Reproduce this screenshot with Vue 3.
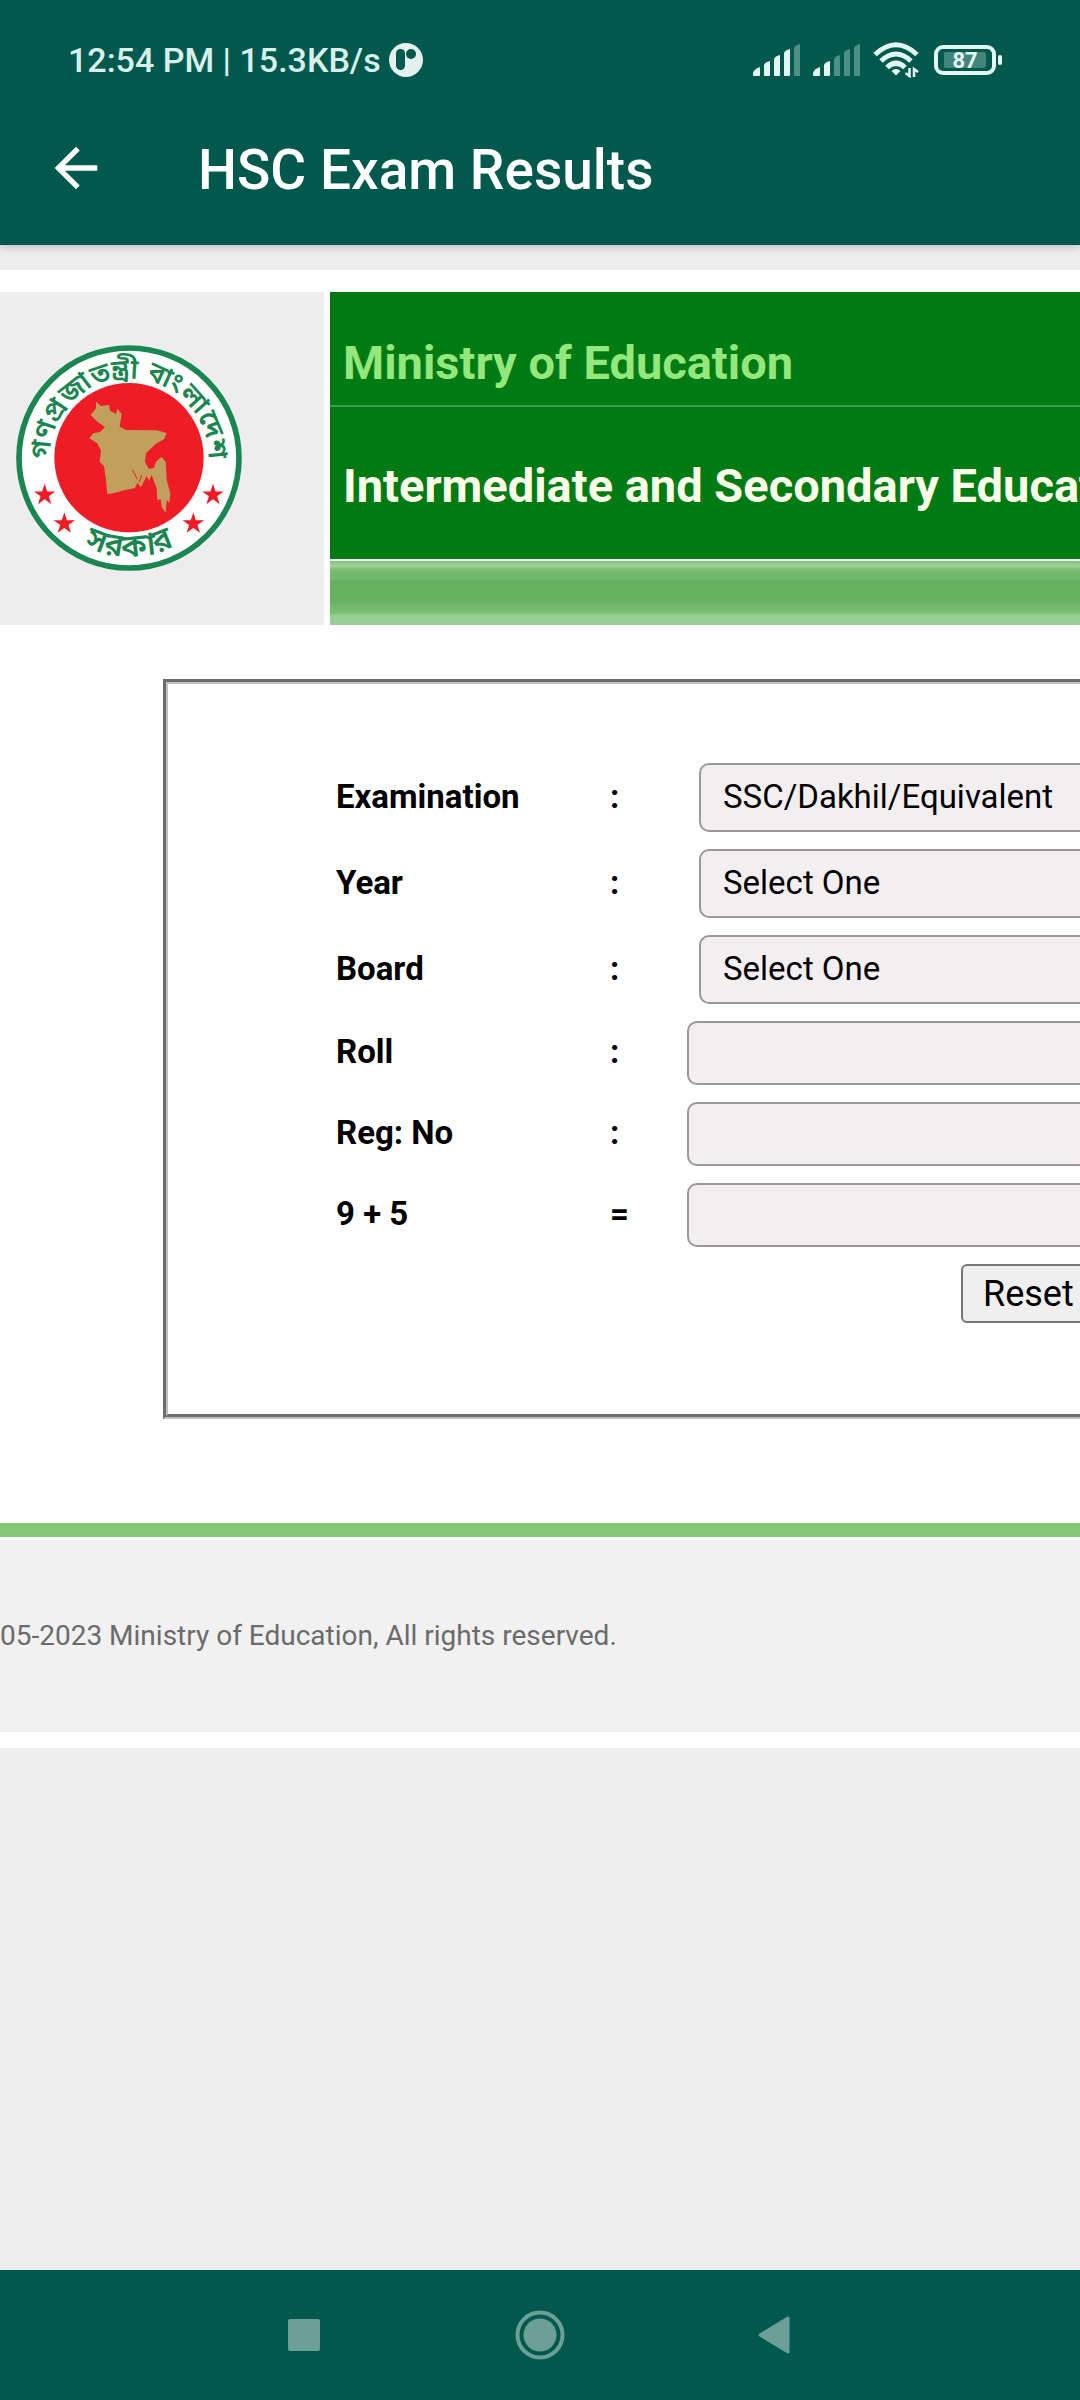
<template>
  <div class="screen">
    <header class="top">
      <div class="status-bar">
        <div class="status-left">
          <span>12:54 PM | 15.3KB/s</span>
          <svg class="app-badge" viewBox="0 0 34 34" aria-hidden="true">
            <circle cx="17" cy="17" r="17" fill="#e3f0ee" />
            <rect x="7" y="6" width="9" height="21" rx="4.500" fill="#00594c" />
            <circle cx="22" cy="11" r="5" fill="#00594c" />
          </svg>
        </div>
        <div class="status-right">
          <svg v-for="(level, i) in signals" :key="i" class="signal" viewBox="0 0 48 32" aria-hidden="true">
            <path
              v-for="(bar, n) in bars"
              :key="n"
              :d="bar"
              fill="#e3f6f3"
              :fill-opacity="n < level ? 1 : 0.35"
            />
          </svg>
          <svg class="wifi" viewBox="0 0 46 36" aria-hidden="true">
            <g fill="none" stroke="#e3f6f3" stroke-width="5">
              <path d="M2 12.500Q23-7 44 12.500" />
              <path d="M8 19Q23 5 38 19" />
              <path d="M14 25.500Q23 17 32 25.500" />
            </g>
            <path d="M18.500 29Q23 25 27.500 29L23 33.500z" fill="#e3f6f3" />
            <path d="M36.500 26v8l-4-3M41 35v-8l4 3" fill="none" stroke="#e3f6f3" stroke-width="2.500" />
          </svg>
          <div class="battery">
            <span>87</span>
          </div>
        </div>
      </div>
      <div class="app-bar">
        <button class="back-btn" type="button" aria-label="Back">
          <svg viewBox="0 0 24 24">
            <path d="M20 11H7.830l5.590-5.590L12 4l-8 8 8 8 1.410-1.410L7.830 13H20z" fill="#fff" />
          </svg>
        </button>
        <h1>HSC Exam Results</h1>
      </div>
    </header>

    <main class="webview">
      <div class="page">
        <div class="banner">
          <div class="banner-logo">
            <svg class="emblem" viewBox="48 195 678 678" role="img" aria-label="Government emblem">
              <defs>
                <path id="arc-top" d="M152.600 575A238 238 0 1 1 621.400 575" />
                <path id="arc-bottom" d="M91 534A296 296 0 0 0 683 534" />
              </defs>
              <circle cx="387" cy="534" r="330" fill="#fff" stroke="#1b8652" stroke-width="17" />
              <circle cx="387" cy="533" r="224" fill="#ee1d25" />
              <path
                d="M288 365L303 378L327 375L330 392L348 402L352 387L365 402L359 440L378 450L470 451L500 459L492 478L470 490L450 508L438 520L435 545L446 566L462 564L468 545L485 530L497 546L500 600L511 640L508 668L500 660L497 698L485 682L482 658L472 660L470 625L455 585L447 602L440 588L423 622L412 608L405 624L375 630L340 640L322 642L318 600L312 558L299 545L303 512L292 490L268 475L280 460L300 456L315 441L292 425L272 405L288 385z"
                fill="#c1a05d"
              />
              <path d="M398 570L412 598M425 585L418 606" stroke="#ee1d25" stroke-width="3" />
              <path v-for="(s, i) in stars" :key="i" :d="starPath(s[0], s[1])" fill="#ee1d25" />
              <text class="ring-text">
                <textPath href="#arc-top" startOffset="50%" text-anchor="middle">গণপ্রজাতন্ত্রী বাংলাদেশ</textPath>
              </text>
              <text class="ring-text ring-text-bottom">
                <textPath href="#arc-bottom" startOffset="50%" text-anchor="middle">সরকার</textPath>
              </text>
            </svg>
          </div>
          <div class="banner-text">
            <p class="ministry">Ministry of Education</p>
            <p class="boards">Intermediate and Secondary Education</p>
            <div class="banner-strip"></div>
          </div>
        </div>

        <form class="result-form" @submit.prevent @reset.prevent="reset">
          <template v-for="field in fields" :key="field.id">
            <label :for="field.id">{{ field.label }}</label>
            <span class="mark">{{ field.mark || ':' }}</span>
            <select v-if="field.options" :id="field.id" v-model="form[field.id]">
              <option v-for="option in field.options" :key="option">{{ option }}</option>
            </select>
            <input v-else :id="field.id" v-model="form[field.id]" type="text" />
          </template>
          <div class="form-actions">
            <button type="reset">Reset</button>
          </div>
        </form>

        <footer class="page-footer">05-2023 Ministry of Education, All rights reserved.</footer>
      </div>
    </main>

    <nav class="nav-bar">
      <button type="button" aria-label="Recent apps">
        <svg viewBox="0 0 50 50"><rect x="9" y="9" width="32" height="32" rx="2" fill="#6b9f97" /></svg>
      </button>
      <button type="button" aria-label="Home">
        <svg viewBox="0 0 50 50">
          <circle cx="25" cy="25" r="22.500" fill="none" stroke="#6b9f97" stroke-width="4" />
          <circle cx="25" cy="25" r="16.500" fill="#6b9f97" />
        </svg>
      </button>
      <button type="button" aria-label="Back">
        <svg viewBox="0 0 50 50">
          <path d="M9 25L37 8V42z" fill="#6b9f97" stroke="#6b9f97" stroke-width="3" stroke-linejoin="round" />
        </svg>
      </button>
    </nav>
  </div>
</template>

<script setup>
import { reactive } from 'vue'

const signals = [4, 2]

const bars = [
  'M0 31v-2q1-4 7-6v8q0 1-1 1h-5q-1 0-1-1z',
  'M11 31V21q1-3 6-4v14q0 1-1 1h-4q-1 0-1-1z',
  'M21 31V15q1-3 6-4v20q0 1-1 1h-4q-1 0-1-1z',
  'M31 31V9q1-3 6-4v26q0 1-1 1h-4q-1 0-1-1z',
  'M41 31V4q1-3 6-4v31q0 1-1 1h-4q-1 0-1-1z'
]

const fields = [
  { id: 'exam', label: 'Examination', options: ['SSC/Dakhil/Equivalent'] },
  { id: 'year', label: 'Year', options: ['Select One'] },
  { id: 'board', label: 'Board', options: ['Select One'] },
  { id: 'roll', label: 'Roll' },
  { id: 'reg', label: 'Reg: No' },
  { id: 'captcha', label: '9 + 5', mark: '=' }
]

const defaults = {
  exam: 'SSC/Dakhil/Equivalent',
  year: 'Select One',
  board: 'Select One',
  roll: '',
  reg: '',
  captcha: ''
}

const form = reactive({ ...defaults })

const reset = () => {
  Object.assign(form, defaults)
}

// centres of the four stars on the emblem ring
const stars = [[134, 645], [193, 731], [639, 645], [580, 731]]

const starPath = (cx, cy) => {
  const points = []
  for (let i = 0; i < 10; i++) {
    const r = i % 2 ? 13 : 34
    const a = (Math.PI / 5) * i - Math.PI / 2
    points.push(`${cx + r * Math.cos(a)} ${cy + r * Math.sin(a)}`)
  }
  return `M${points.join('L')}z`
}
</script>

<style>
body {
  margin: 0;
  background: #ededed;
}
</style>

<style scoped>
.screen {
  display: flex;
  flex-direction: column;
  min-height: 100vh;
  overflow: hidden;
  font-family: Roboto, "Liberation Sans", sans-serif;
}

button {
  padding: 0;
  border: 0;
  background: none;
  font-family: inherit;
}

svg {
  display: block;
}

.top {
  position: relative;
  background: #00594c;
  box-shadow: 0 2px 8px rgba(0, 0, 0, 0.2);
}

.status-bar {
  display: flex;
  justify-content: space-between;
  align-items: center;
  height: 90px;
  padding: 30px 78px 0 68px;
  box-sizing: border-box;
}

.status-left {
  display: flex;
  align-items: center;
  gap: 8px;
  color: #d9efec;
  font-size: 34px;
  font-weight: 500;
}

.app-badge {
  width: 34px;
  height: 34px;
}

.status-right {
  display: flex;
  align-items: center;
  gap: 12px;
}

.signal {
  width: 48px;
  height: 32px;
}

.wifi {
  width: 46px;
  height: 36px;
}

.battery {
  position: relative;
  display: flex;
  width: 62px;
  height: 30px;
  padding: 3px;
  margin: 0 6px 0 3px;
  border: 4px solid #e3f6f3;
  border-radius: 9px;
  box-sizing: border-box;
}

.battery::after {
  content: "";
  position: absolute;
  top: 6px;
  right: -10px;
  width: 4px;
  height: 10px;
  border-radius: 2px;
  background: #e3f6f3;
}

.battery span {
  flex: 1;
  margin: 0 3px;
  border-radius: 2px;
  background: #44857b;
  color: #e3f6f3;
  font-size: 22px;
  font-weight: 700;
  line-height: 17px;
  text-align: center;
}

.app-bar {
  display: flex;
  align-items: center;
  gap: 90px;
  height: 155px;
  padding-left: 44px;
}

.back-btn,
.back-btn svg {
  width: 64px;
  height: 64px;
}

h1 {
  margin: 0;
  padding-top: 5px;
  color: #fff;
  font-size: 55px;
  font-weight: 500;
}

.webview {
  flex: 1;
  padding-top: 25px;
  overflow: hidden;
}

/* the site is wider than the phone and runs off the right edge */
.page {
  width: calc(100% + 80px);
  padding: 22px 0 16px;
  background: #fff;
}

.banner {
  display: flex;
  gap: 6px;
  margin-bottom: 54px;
}

.banner-logo {
  display: flex;
  align-items: center;
  width: 324px;
  padding: 0 0 2px 16px;
  box-sizing: border-box;
  background: #ededed;
}

.emblem {
  width: 226px;
  height: 226px;
}

.ring-text {
  fill: #1b8652;
  font-family: "Noto Sans Bengali", "Noto Sans", sans-serif;
  font-size: 83px;
  font-weight: 600;
}

.ring-text-bottom {
  font-size: 96px;
}

.banner-text {
  flex: 1;
  min-width: 0;
}

.ministry,
.boards {
  margin: 0;
  padding: 44px 0 15px 13px;
  background: #007a13;
  color: #93e77c;
  font-size: 47px;
  font-weight: 700;
  line-height: 54px;
  white-space: nowrap;
}

.boards {
  padding: 52px 0 46px 13px;
  border-top: 2px solid #3c9c49;
  border-bottom: 2px solid #f0fff0;
  color: #fdffe9;
}

.banner-strip {
  height: 64px;
  background: linear-gradient(#8bb984 0, #9ad795 5px, #85bd80 8px, #73bc6e 10px, #70b86b 18px, #66b061 20px, #66b061 38px, #7cbf78 52px, #95cf91 54px, #9ccd99 64px);
}

.result-form {
  display: grid;
  grid-template-columns: 274px 77px 1fr;
  align-items: center;
  row-gap: 17px;
  margin-left: 163px;
  padding: 79px 20px 91px 168px;
  border: 5px groove #c0c0c0;
  font-size: 33px;
}

.result-form label,
.mark {
  padding-bottom: 3px;
  color: #000;
  font-weight: 700;
}

.result-form select,
.result-form input {
  min-width: 0;
  height: 64px;
  margin: 0;
  padding: 0 22px;
  border: 2px solid #999;
  border-radius: 10px;
  box-sizing: border-box;
  background: #f3eff1;
  color: #000;
  font-family: inherit;
  font-size: 33px;
}

.result-form select {
  appearance: none;
  height: 69px;
  margin-left: 12px;
  padding-bottom: 2px;
}

.form-actions {
  display: flex;
  grid-column: 3;
  padding-left: 274px;
}

.form-actions button {
  height: 59px;
  padding: 0 20px;
  border: 2px solid #767676;
  border-radius: 6px;
  background: #efefef;
  color: #000;
  font-size: 36px;
}

.page-footer {
  margin-top: 104px;
  padding: 81px 0 79px;
  border-top: 14px solid #86c777;
  background: linear-gradient(#fff 3px, #f1f1f1 3px);
  color: #6b6b6b;
  font-size: 28px;
  line-height: 35px;
}

.nav-bar {
  display: grid;
  grid-template-columns: repeat(3, 236px);
  justify-content: center;
  align-items: center;
  height: 130px;
  background: #00594c;
}

.nav-bar button {
  justify-self: center;
}

.nav-bar svg {
  width: 50px;
  height: 50px;
}
</style>
